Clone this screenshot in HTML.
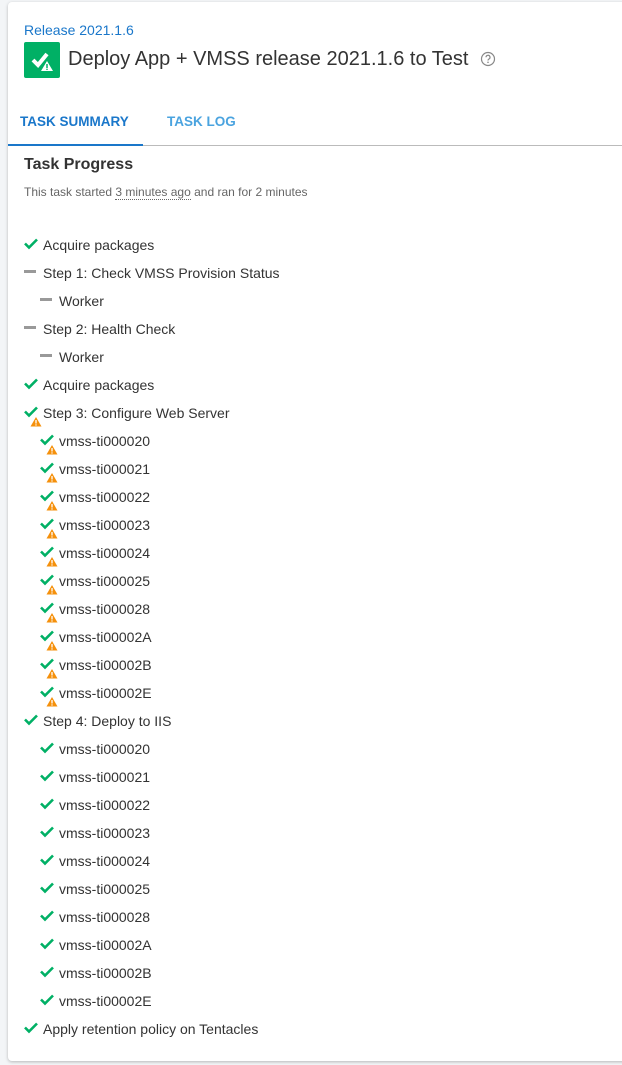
<!DOCTYPE html>
<html><head><meta charset="utf-8"><style>
html,body{margin:0;width:622px;height:1065px;overflow:hidden}
body{background:#f3f5f7;font-family:"Liberation Sans",Arial,sans-serif;position:relative}
.card{position:absolute;left:8px;top:2px;width:640px;height:1059px;background:#fff;border-radius:4px;box-shadow:0 1px 3px rgba(0,0,0,.25)}
.a{position:absolute;white-space:nowrap}
.row{position:absolute;height:20px;font-size:14px;color:#333;line-height:20px;white-space:nowrap}
.row span{white-space:nowrap}
.row svg{position:absolute;top:0}
</style></head><body>
<div class="card"></div>
<div class="a" style="left:24px;top:22px;font-size:14px;color:#1a77ca">Release 2021.1.6</div>
<div class="a" style="left:24px;top:42px;width:36px;height:36px;background:#00b065;border-radius:2px">
<svg width="36" height="36" viewBox="0 0 36 36"><path d="M9 18l5 5 9-11" stroke="#fff" stroke-width="4" fill="none"/><path d="M23 19l6 10h-12z" fill="#fff"/><path d="M23 22v4" stroke="#00b065" stroke-width="1.5"/><circle cx="23" cy="27.3" r=".8" fill="#00b065"/></svg></div>
<div class="a" style="left:68px;top:48px;font-size:20px;color:#333">Deploy App + VMSS release 2021.1.6 to Test</div>
<svg class="a" style="left:480px;top:51px" width="16" height="16" viewBox="0 0 16 16"><circle cx="8" cy="8" r="6.5" stroke="#888" stroke-width="1.2" fill="none"/><path d="M6 6.3a2 2 0 1 1 2.8 1.8c-.6.3-.8.7-.8 1.4" stroke="#888" stroke-width="1.2" fill="none"/><circle cx="8" cy="11.3" r=".8" fill="#888"/></svg>
<div class="a" style="left:20px;top:114px;font-size:13.5px;font-weight:bold;color:#1a77ca">TASK SUMMARY</div>
<div class="a" style="left:167px;top:114px;font-size:13.5px;font-weight:bold;color:#4aa3df">TASK LOG</div>
<div class="a" style="left:8px;top:145px;width:614px;height:1px;background:#bbb"></div>
<div class="a" style="left:8px;top:144px;width:135px;height:2px;background:#1a77ca"></div>
<div class="a" style="left:24px;top:156px;font-size:16px;font-weight:bold;color:#333">Task Progress</div>
<div class="a" style="left:24px;top:185px;font-size:12px;color:#666">This task started <span style="border-bottom:1px dotted #666">3 minutes ago</span> and ran for 2 minutes</div>
<div id="list"></div>
<script>
var ck='<path d="M1 5.5l4 4 8-8" stroke="#00b065" stroke-width="2.6" fill="none"/>';
var wn='<path d="M12 11l5.5 9.5h-11z" fill="#f5900b"/><path d="M12 14v3.5" stroke="#fff" stroke-width="1.3"/><circle cx="12" cy="19" r=".7" fill="#fff"/>';
var dash='<rect x="0" y="7" width="12" height="3" fill="#999"/>';
var rows=[[0,'c','Acquire packages'],[0,'d','Step 1: Check VMSS Provision Status'],[1,'d','Worker'],[0,'d','Step 2: Health Check'],[1,'d','Worker'],[0,'c','Acquire packages'],[0,'w','Step 3: Configure Web Server']];
var ids=['20','21','22','23','24','25','28','2A','2B','2E'];
ids.forEach(function(i){rows.push([1,'w','vmss-ti0000'+i])});
rows.push([0,'c','Step 4: Deploy to IIS']);
ids.forEach(function(i){rows.push([1,'c','vmss-ti0000'+i])});
rows.push([0,'c','Apply retention policy on Tentacles']);
var h='';
rows.forEach(function(r,k){var y=235+k*28,x=24+r[0]*16;
var ic=r[1]=='c'?'<svg style="left:0;top:3px" width="22" height="22" viewBox="0 0 22 22">'+ck+'</svg>':r[1]=='w'?'<svg style="left:0;top:3px" width="22" height="22" viewBox="0 0 22 22">'+ck+wn+'</svg>':'<svg style="left:0;top:0" width="14" height="20" viewBox="0 0 14 20">'+dash+'</svg>';
h+='<div class="row" style="left:'+x+'px;top:'+y+'px">'+ic+'<span style="position:absolute;left:19px">'+r[2]+'</span></div>';});
document.getElementById('list').innerHTML=h;
</script>
</body></html>
